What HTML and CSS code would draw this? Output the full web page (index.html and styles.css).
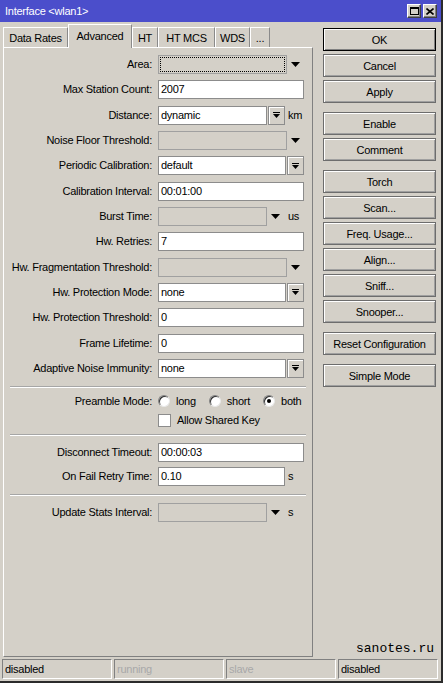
FILE: index.html
```html
<!DOCTYPE html>
<html>
<head>
<meta charset="utf-8">
<title>Interface &lt;wlan1&gt;</title>
<link rel="stylesheet" href="styles.css">
</head>
<body>
<div class="window">
  <div class="titlebar">
    <span class="title">Interface &lt;wlan1&gt;</span>
    <div class="tb-btns">
      <span class="tb-btn"><svg width="9" height="8" viewBox="0 0 9 8"><rect x="0.5" y="0.5" width="8" height="7" fill="none" stroke="#000"/><rect x="0" y="0" width="9" height="2" fill="#000"/></svg></span>
      <span class="tb-btn"><svg width="8" height="7" viewBox="0 0 8 7"><path d="M0.5 0.5L7.5 6.5M7.5 0.5L0.5 6.5" stroke="#000" stroke-width="1.6" fill="none"/></svg></span>
    </div>
  </div>
  <div class="content">
    <div class="left">
      <div class="tabs">
        <div class="tab t-rates">Data Rates</div>
        <div class="tab tab-active t-adv">Advanced</div>
        <div class="tab t-ht">HT</div>
        <div class="tab t-mcs">HT MCS</div>
        <div class="tab t-wds">WDS</div>
        <div class="tab t-more">...</div>
      </div>
      <div class="panel">
        <div class="grid">
          <div class="lbl">Area:</div>
          <div class="field"><div class="input disabled focus w129"></div><span class="arrow"><svg width="9" height="5" viewBox="0 0 9 5"><polygon points="0,0 9,0 4.5,5" fill="#000"/></svg></span></div>

          <div class="lbl">Max Station Count:</div>
          <div class="field"><div class="input w146">2007</div></div>

          <div class="lbl">Distance:</div>
          <div class="field"><div class="input w109">dynamic</div><span class="dropbtn"><svg width="7" height="6" viewBox="0 0 7 6"><rect x="0" y="0" width="7" height="1" fill="#000"/><polygon points="0,2 7,2 3.5,6" fill="#000"/></svg></span><span class="unit">km</span></div>

          <div class="lbl">Noise Floor Threshold:</div>
          <div class="field"><div class="input disabled w129"></div><span class="arrow"><svg width="9" height="5" viewBox="0 0 9 5"><polygon points="0,0 9,0 4.5,5" fill="#000"/></svg></span></div>

          <div class="lbl">Periodic Calibration:</div>
          <div class="field"><div class="input w128">default</div><span class="dropbtn"><svg width="7" height="6" viewBox="0 0 7 6"><rect x="0" y="0" width="7" height="1" fill="#000"/><polygon points="0,2 7,2 3.5,6" fill="#000"/></svg></span></div>

          <div class="lbl">Calibration Interval:</div>
          <div class="field"><div class="input w146">00:01:00</div></div>

          <div class="lbl">Burst Time:</div>
          <div class="field"><div class="input disabled w109"></div><span class="arrow"><svg width="9" height="5" viewBox="0 0 9 5"><polygon points="0,0 9,0 4.5,5" fill="#000"/></svg></span><span class="unit unit-far">us</span></div>

          <div class="lbl">Hw. Retries:</div>
          <div class="field"><div class="input w146">7</div></div>

          <div class="lbl">Hw. Fragmentation Threshold:</div>
          <div class="field"><div class="input disabled w129"></div><span class="arrow"><svg width="9" height="5" viewBox="0 0 9 5"><polygon points="0,0 9,0 4.5,5" fill="#000"/></svg></span></div>

          <div class="lbl">Hw. Protection Mode:</div>
          <div class="field"><div class="input w128">none</div><span class="dropbtn"><svg width="7" height="6" viewBox="0 0 7 6"><rect x="0" y="0" width="7" height="1" fill="#000"/><polygon points="0,2 7,2 3.5,6" fill="#000"/></svg></span></div>

          <div class="lbl">Hw. Protection Threshold:</div>
          <div class="field"><div class="input w146">0</div></div>

          <div class="lbl">Frame Lifetime:</div>
          <div class="field"><div class="input w146">0</div></div>

          <div class="lbl">Adaptive Noise Immunity:</div>
          <div class="field"><div class="input w128">none</div><span class="dropbtn"><svg width="7" height="6" viewBox="0 0 7 6"><rect x="0" y="0" width="7" height="1" fill="#000"/><polygon points="0,2 7,2 3.5,6" fill="#000"/></svg></span></div>
        </div>

        <div class="sep sep-1"></div>

        <div class="grid grid-tight">
          <div class="lbl">Preamble Mode:</div>
          <div class="field radios">
            <span class="opt"><span class="radio"></span>long</span>
            <span class="opt"><span class="radio"></span>short</span>
            <span class="opt"><span class="radio"><span class="dot"></span></span>both</span>
          </div>
          <div class="lbl"></div>
          <div class="field"><span class="opt"><span class="check"></span>Allow Shared Key</span></div>
        </div>

        <div class="sep sep-2"></div>

        <div class="grid grid-5">
          <div class="lbl">Disconnect Timeout:</div>
          <div class="field"><div class="input w146">00:00:03</div></div>
          <div class="lbl">On Fail Retry Time:</div>
          <div class="field"><div class="input w127">0.10</div><span class="unit">s</span></div>
        </div>

        <div class="sep"></div>

        <div class="grid">
          <div class="lbl">Update Stats Interval:</div>
          <div class="field"><div class="input disabled w109"></div><span class="arrow"><svg width="9" height="5" viewBox="0 0 9 5"><polygon points="0,0 9,0 4.5,5" fill="#000"/></svg></span><span class="unit unit-far">s</span></div>
        </div>
      </div>
    </div>
    <div class="side">
      <div class="btn btn-default">OK</div>
      <div class="btn">Cancel</div>
      <div class="btn">Apply</div>
      <div class="btn group">Enable</div>
      <div class="btn">Comment</div>
      <div class="btn group">Torch</div>
      <div class="btn">Scan...</div>
      <div class="btn">Freq. Usage...</div>
      <div class="btn">Align...</div>
      <div class="btn">Sniff...</div>
      <div class="btn">Snooper...</div>
      <div class="btn group">Reset Configuration</div>
      <div class="btn group">Simple Mode</div>
      <div class="brand">sanotes.ru</div>
    </div>
  </div>
  <div class="status">
    <div class="cell">disabled</div>
    <div class="cell cell-off">running</div>
    <div class="cell cell-off">slave</div>
    <div class="cell cell-last">disabled</div>
  </div>
</div>
</body>
</html>
```

FILE: styles.css
```css
html, body {
  margin: 0;
  padding: 0;
  background: #d4d0c8;
}
body {
  font-family: "Liberation Sans", Arial, sans-serif;
  font-size: 11px;
  letter-spacing: -0.25px;
  color: #000;
}
.window {
  width: 443px;
  height: 683px;
  box-sizing: border-box;
  border-right: 2px solid #2b2b2b;
  border-bottom: 2px solid #2b2b2b;
  display: flex;
  flex-direction: column;
  background: #d4d0c8;
  overflow: hidden;
}

/* title bar */
.titlebar {
  height: 22px;
  flex: none;
  background: #4b4ecb;
  display: flex;
  align-items: center;
  padding: 0 4px 0 5px;
  color: #fff;
}
.title {
  flex: 1;
  white-space: nowrap;
}
.tb-btns {
  display: flex;
  gap: 2px;
}
.tb-btn {
  width: 14px;
  height: 14px;
  box-sizing: border-box;
  background: #d4d0c8;
  border: 1px solid;
  border-color: #fff #404040 #404040 #fff;
  box-shadow: inset -1px -1px #808080;
  display: flex;
  align-items: center;
  justify-content: center;
}
.tb-btn svg { display: block; }

/* content */
.content {
  flex: 1;
  min-height: 0;
  display: flex;
  padding: 0 0 2px 3px;
}
.left {
  width: 310px;
  display: flex;
  flex-direction: column;
}
.tabs {
  display: flex;
  align-items: flex-end;
  height: 23px;
  margin-top: 2px;
  flex: none;
}
.tab {
  height: 20px;
  box-sizing: border-box;
  border-top: 1px solid #fff;
  border-left: 1px solid #fff;
  border-right: 1px solid #8a8a8a;
  display: flex;
  align-items: center;
  justify-content: center;
  white-space: nowrap;
  padding-top: 1px;
}
.tab-active {
  height: 24px;
  margin-bottom: -1px;
  position: relative;
  z-index: 1;
  background: #d4d0c8;
  padding-top: 0;
  padding-bottom: 2px;
}
.t-rates { width: 65px; }
.t-adv { width: 64px; }
.t-ht { width: 26px; }
.t-mcs { width: 57px; }
.t-wds { width: 35px; }
.t-more { width: 20px; }

.panel {
  flex: 1;
  border: 1px solid;
  border-color: #fff #808080 #808080 #fff;
  padding-top: 7px;
}

/* form grid */
.grid {
  display: grid;
  grid-template-columns: 148px 1fr;
  column-gap: 6px;
  row-gap: 6.333px;
  grid-auto-rows: 19px;
}
.grid-tight { row-gap: 0; }
.grid-5 { row-gap: 5px; }
.lbl {
  text-align: right;
  line-height: 19px;
  white-space: nowrap;
}
.field {
  display: flex;
  align-items: center;
  height: 19px;
}
.input {
  height: 19px;
  box-sizing: border-box;
  background: #fff;
  border: 1px solid #8c8c8c;
  padding-left: 2px;
  line-height: 17px;
  white-space: nowrap;
  overflow: hidden;
}
.input.disabled {
  background: #d4d0c8;
  border-color: #a0a0a0;
}
.input.focus {
  outline: 1px dotted #000;
  outline-offset: -3px;
}
.w146 { width: 146px; }
.w129 { width: 129px; }
.w128 { width: 128px; }
.w127 { width: 127px; }
.w109 { width: 109px; }

.arrow {
  margin-left: 4px;
  display: flex;
  align-items: center;
}
.arrow svg, .dropbtn svg { display: block; }
.dropbtn {
  width: 17px;
  height: 19px;
  box-sizing: border-box;
  margin-left: 1px;
  background: #d4d0c8;
  border: 1px solid #8c8c8c;
  box-shadow: inset 1px 1px #fff;
  display: flex;
  align-items: center;
  justify-content: center;
}
.unit {
  margin-left: 3px;
}
.unit-far {
  margin-left: 8px;
}

/* radios / check */
.radios {
  gap: 13px;
}
.opt {
  display: inline-flex;
  align-items: center;
  gap: 6px;
  white-space: nowrap;
}
.radio {
  width: 12px;
  height: 12px;
  box-sizing: border-box;
  border-radius: 50%;
  background: #fff;
  border: 1px solid;
  border-color: #808080 #e8e8e8 #e8e8e8 #808080;
  box-shadow: inset 1px 1px #303030;
  display: flex;
  align-items: center;
  justify-content: center;
}
.dot {
  width: 4px;
  height: 4px;
  border-radius: 50%;
  background: #000;
}
.check {
  width: 13px;
  height: 13px;
  box-sizing: border-box;
  background: #fff;
  border: 1px solid #8c8c8c;
}

/* separators */
.sep {
  height: 0;
  border-top: 1px solid #a6a6a6;
  border-bottom: 1px solid #fff;
  margin: 8px 6px 7px;
}
.sep-1 { margin-bottom: 4px; }
.sep-2 { margin-top: 4px; }

/* side buttons */
.side {
  width: 113px;
  margin-left: 10px;
  display: flex;
  flex-direction: column;
  padding-top: 6px;
}
.btn {
  height: 23px;
  box-sizing: border-box;
  margin-bottom: 3px;
  border: 1px solid #6d6d6d;
  box-shadow: inset 1px 1px #fff, inset -1px -1px #a0a0a0;
  display: flex;
  align-items: center;
  justify-content: center;
  white-space: nowrap;
}
.btn-default {
  border-color: #000;
  box-shadow: inset 1px 1px #fff, inset -1px -1px #808080;
}
.group { margin-top: 6px; }
.brand {
  margin-top: auto;
  margin-bottom: 1px;
  text-align: right;
  padding-right: 2px;
  font-family: "Liberation Mono", "Courier New", monospace;
  font-size: 13px;
  letter-spacing: 0;
  line-height: 15px;
}

/* status bar */
.status {
  height: 20px;
  flex: none;
  margin-bottom: 2px;
  display: flex;
  gap: 2px;
  padding-left: 2px;
}
.cell {
  width: 110px;
  box-sizing: border-box;
  border: 1px solid;
  border-color: #808080 #fff #fff #808080;
  padding-left: 2px;
  line-height: 18px;
  white-space: nowrap;
  overflow: hidden;
}
.cell-off { color: #a8a8a8; }
.cell-last { width: 100px; }
```
